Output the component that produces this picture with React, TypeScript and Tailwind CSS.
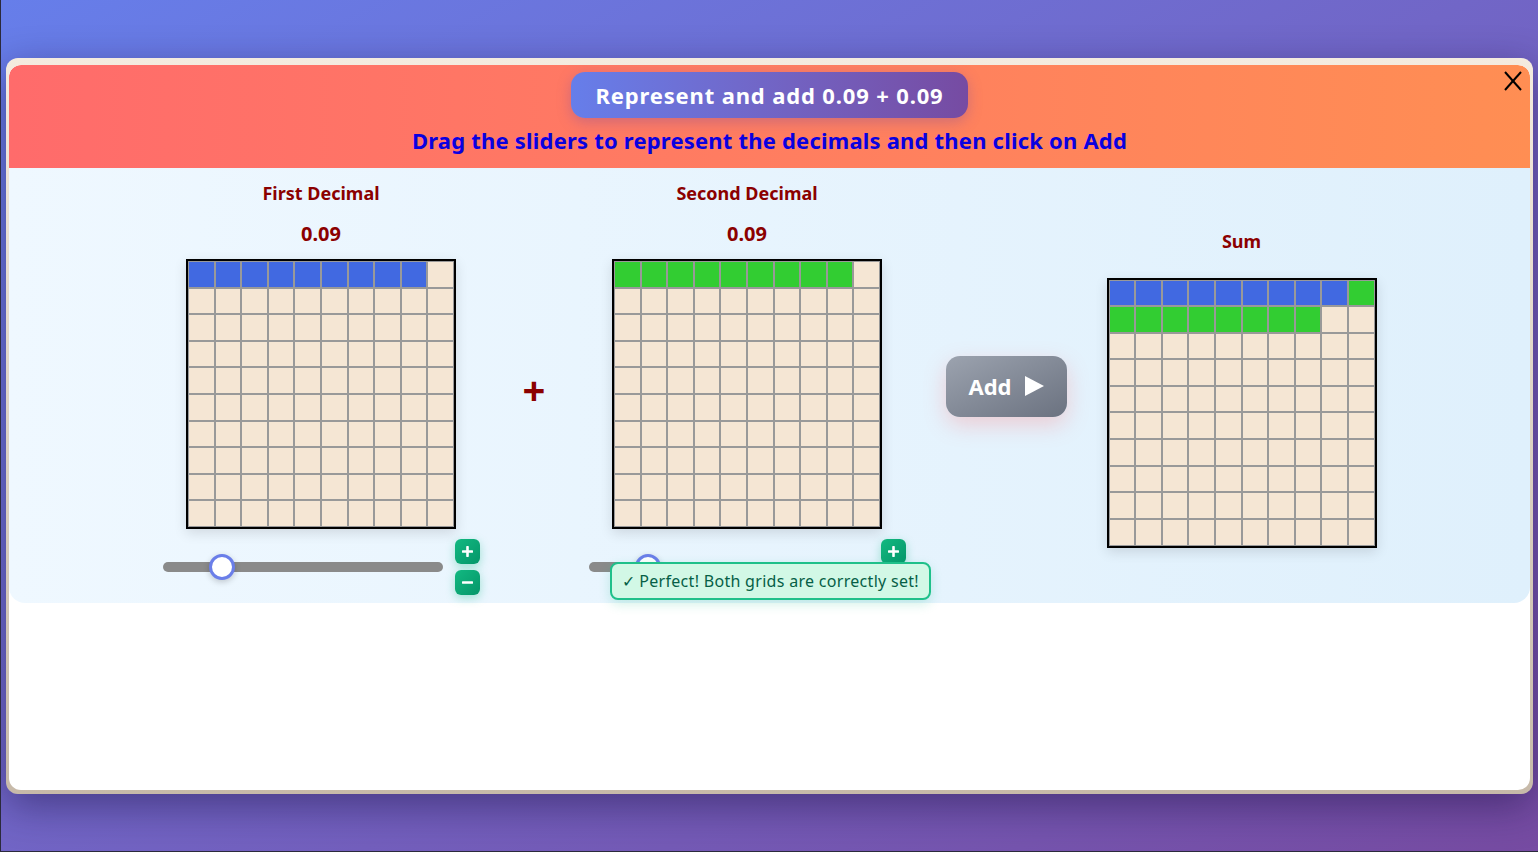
import React from 'react';

const font = { fontFamily: '"Comic Sans MS", "Noto Sans", sans-serif' };

type CellColor = 'blue' | 'green' | 'empty';

const cellClass: Record<CellColor, string> = {
  blue: 'bg-[#4169e1]',
  green: 'bg-[#32cd32]',
  empty: 'bg-[#f5e6d4]',
};

function HundredGrid({ cells }: { cells: CellColor[] }) {
  return (
    <div className="grid h-[270px] w-[270px] grid-cols-10 gap-[2px] border-2 border-black bg-[#999] p-px shadow-[0_4px_12px_rgba(0,0,0,0.12)]">
      {cells.map((c, i) => (
        <div key={i} className={cellClass[c]} />
      ))}
    </div>
  );
}

function makeCells(blue: number, green: number): CellColor[] {
  return Array.from({ length: 100 }, (_, i) => (i < blue ? 'blue' : i < blue + green ? 'green' : 'empty'));
}

function StepButton({ kind }: { kind: 'plus' | 'minus' }) {
  return (
    <button
      type="button"
      className="flex h-[25px] w-[25px] items-center justify-center rounded-[6px] bg-gradient-to-br from-[#12b981] to-[#059669] shadow-[0_3px_10px_rgba(16,185,129,0.35)]"
    >
      <svg width="11" height="11" viewBox="0 0 11 11">
        <line x1="1" y1="5.5" x2="10" y2="5.5" stroke="white" strokeWidth="2.6" strokeLinecap="round" />
        {kind === 'plus' && <line x1="5.5" y1="1" x2="5.5" y2="10" stroke="white" strokeWidth="2.6" strokeLinecap="round" />}
      </svg>
    </button>
  );
}

function Slider({ value, max, showMinus = true }: { value: number; max: number; showMinus?: boolean }) {
  const thumbLeft = (value / max) * (280 - 26) + 1;
  return (
    <div className="mt-[10px] flex items-center gap-3">
      <div className="relative h-[10px] w-[280px] rounded-full bg-[#8a8a8a]">
        <div
          className="absolute top-1/2 h-[26px] w-[26px] -translate-y-1/2 rounded-full border-[3px] border-[#6a7ee9] bg-white shadow-[0_2px_6px_rgba(0,0,0,0.2)]"
          style={{ left: thumbLeft }}
        />
      </div>
      <div className="flex flex-col gap-[6px]">
        <StepButton kind="plus" />
        <div className={showMinus ? '' : 'invisible'}>
          <StepButton kind="minus" />
        </div>
      </div>
    </div>
  );
}

function DecimalColumn({
  title,
  value,
  cells,
  children,
}: {
  title: string;
  value: string;
  cells: CellColor[];
  children?: React.ReactNode;
}) {
  return (
    <div className="relative flex w-[317px] flex-col items-center">
      <h3 className="text-[18px] font-bold leading-6 text-[#8b0000]">{title}</h3>
      <div className="mt-[17px] text-[20px] font-bold leading-6 text-[#8b0000]">{value}</div>
      <div className="mt-[13px]">
        <HundredGrid cells={cells} />
      </div>
      {children}
    </div>
  );
}

export default function App() {
  return (
    <div
      className="h-[852px] w-[1538px] overflow-hidden border-b border-l border-[#2b2a3c] bg-gradient-to-br from-[#667eea] to-[#764ba2] px-[5px] pt-[58px]"
      style={font}
    >
      <div className="rounded-[12px] bg-gradient-to-b from-[#f4ebdf] to-[#c7baa9] px-[3px] pb-[4px] pt-[7px] shadow-[0_12px_40px_rgba(20,10,60,0.45)]">
        <div className="h-[725px] overflow-hidden rounded-[12px] bg-white">
          <header className="relative flex h-[103px] flex-col items-center rounded-t-[12px] bg-gradient-to-r from-[#ff6b6b] to-[#ff8e53] pt-[7px]">
            <div className="rounded-[14px] bg-gradient-to-r from-[#667eea] to-[#764ba2] px-6 py-[8px] text-[22px] font-bold leading-[30px] tracking-[0.85px] text-white shadow-[0_4px_14px_rgba(118,75,162,0.35)]">
              Represent and add 0.09 + 0.09
            </div>
            <p className="mt-[9px] text-[22px] font-bold leading-[26px] tracking-[0.2px] text-[#0a00e0]">
              Drag the sliders to represent the decimals and then click on Add
            </p>
            <button type="button" className="absolute right-[7px] top-[5px]" aria-label="Close">
              <svg width="20" height="22" viewBox="0 0 20 22">
                <line x1="2" y1="2" x2="18" y2="20" stroke="black" strokeWidth="2" />
                <line x1="18" y1="2" x2="2" y2="20" stroke="black" strokeWidth="2" />
              </svg>
            </button>
          </header>

          <section className="flex h-[435px] items-center justify-center gap-[40px] rounded-b-[16px] bg-gradient-to-r from-[#eff8ff] to-[#dff0fc] pb-[8px] pt-[13px]">
            <DecimalColumn title="First Decimal" value="0.09" cells={makeCells(9, 0)}>
              <Slider value={9} max={50} />
            </DecimalColumn>

            <div className="flex w-[29px] justify-center pt-[4px] text-[40px] font-bold leading-none text-[#8b0000]">+</div>

            <DecimalColumn title="Second Decimal" value="0.09" cells={makeCells(0, 9).map((c) => (c === 'blue' ? 'green' : c))}>
              <Slider value={9} max={50} showMinus={false} />
              <div className="absolute left-[21px] top-[381px] whitespace-nowrap rounded-[8px] border-2 border-[#1fc08a] bg-[#d2f8e6] px-[10px] py-[6px] text-[16px] leading-[22px] tracking-[0.3px] text-[#065f46] shadow-[0_4px_12px_rgba(16,185,129,0.2)]">
                ✓ Perfect! Both grids are correctly set!
              </div>
            </DecimalColumn>

            <button
              type="button"
              className="mb-[4px] flex h-[61px] w-[121px] items-center justify-center gap-3 rounded-[14px] bg-gradient-to-br from-[#9ca3af] to-[#6b7280] text-[22px] font-bold text-white shadow-[0_8px_22px_rgba(255,107,107,0.28)]"
            >
              Add
              <svg width="20" height="20" viewBox="0 0 20 20">
                <polygon points="1,0 20,10 1,20" fill="white" />
              </svg>
            </button>

            <div className="flex w-[270px] flex-col items-center">
              <h3 className="text-[18px] font-bold leading-6 text-[#8b0000]">Sum</h3>
              <div className="mt-[25px]">
                <HundredGrid cells={makeCells(9, 9)} />
              </div>
            </div>
          </section>
        </div>
      </div>
    </div>
  );
}
